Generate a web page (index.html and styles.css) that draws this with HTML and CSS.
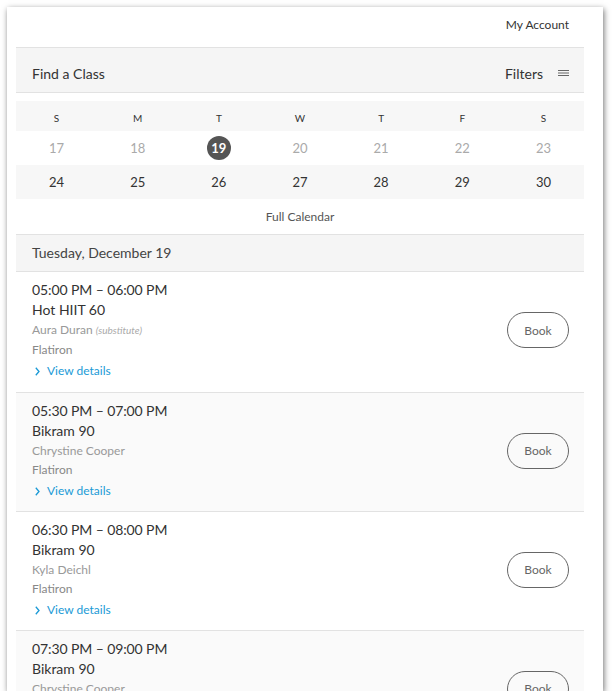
FILE: index.html
```html
<!DOCTYPE html>
<html>
<head>
<meta charset="utf-8">
<link rel="stylesheet" href="styles.css">
</head>
<body>
<div class="frame">
  <div class="top"><span>My Account</span></div>
  <div class="findbar">
    <span>Find a Class</span>
    <span class="filters">Filters
      <svg class="burger" width="11" height="6" viewBox="0 0 11 6"><rect x="0" y="0" width="11" height="1" fill="#666"/><rect x="0" y="2.5" width="11" height="1" fill="#666"/><rect x="0" y="5" width="11" height="1" fill="#666"/></svg>
    </span>
  </div>
  <div class="cal">
    <div class="row dow"><span>S</span><span>M</span><span>T</span><span>W</span><span>T</span><span>F</span><span>S</span></div>
    <div class="row week past"><span>17</span><span>18</span><span><b class="today">19</b></span><span>20</span><span>21</span><span>22</span><span>23</span></div>
    <div class="row week next"><span>24</span><span>25</span><span>26</span><span>27</span><span>28</span><span>29</span><span>30</span></div>
  </div>
  <div class="fullcal">Full Calendar</div>
  <div class="dayhead">Tuesday, December 19</div>
  <div class="list">
    <div class="item">
      <div class="info">
        <div class="time">05:00 PM – 06:00 PM</div>
        <div class="name">Hot HIIT 60</div>
        <div class="instr">Aura Duran <i class="sub">(substitute)</i></div>
        <div class="loc">Flatiron</div>
        <div class="details"><svg class="chev" width="5" height="9" viewBox="0 0 5 9"><path d="M0.8 0.8 L4 4.5 L0.8 8.2" fill="none" stroke="#1b9ad6" stroke-width="1.3"/></svg>View details</div>
      </div>
      <div class="book">Book</div>
    </div>
    <div class="item alt">
      <div class="info">
        <div class="time">05:30 PM – 07:00 PM</div>
        <div class="name">Bikram 90</div>
        <div class="instr">Chrystine Cooper</div>
        <div class="loc">Flatiron</div>
        <div class="details"><svg class="chev" width="5" height="9" viewBox="0 0 5 9"><path d="M0.8 0.8 L4 4.5 L0.8 8.2" fill="none" stroke="#1b9ad6" stroke-width="1.3"/></svg>View details</div>
      </div>
      <div class="book">Book</div>
    </div>
    <div class="item">
      <div class="info">
        <div class="time">06:30 PM – 08:00 PM</div>
        <div class="name">Bikram 90</div>
        <div class="instr">Kyla Deichl</div>
        <div class="loc">Flatiron</div>
        <div class="details"><svg class="chev" width="5" height="9" viewBox="0 0 5 9"><path d="M0.8 0.8 L4 4.5 L0.8 8.2" fill="none" stroke="#1b9ad6" stroke-width="1.3"/></svg>View details</div>
      </div>
      <div class="book">Book</div>
    </div>
    <div class="item alt">
      <div class="info">
        <div class="time">07:30 PM – 09:00 PM</div>
        <div class="name">Bikram 90</div>
        <div class="instr">Chrystine Cooper</div>
        <div class="loc">Flatiron</div>
        <div class="details"><svg class="chev" width="5" height="9" viewBox="0 0 5 9"><path d="M0.8 0.8 L4 4.5 L0.8 8.2" fill="none" stroke="#1b9ad6" stroke-width="1.3"/></svg>View details</div>
      </div>
      <div class="book">Book</div>
    </div>
  </div>
</div>
</body>
</html>
```
FILE: styles.css
```css
* { box-sizing: border-box; }
html, body { margin: 0; padding: 0; background: #fff; }
body { font-family: Lato, "Open Sans", sans-serif; color: #333; }
.frame {
  margin: 7px 0 0 7px;
  width: 596px;
  height: 684px;
  background: #fff;
  box-shadow: 1px 2px 6px rgba(0,0,0,0.55);
  overflow: hidden;
  padding: 0 19px 0 9px;
}
.top {
  height: 40px;
  display: flex;
  justify-content: flex-end;
  align-items: center;
  padding: 0 15px 6px 0;
  font-size: 12px;
  color: #333;
}
.findbar {
  height: 46px;
  border-top: 1px solid #e2e2e2;
  border-bottom: 1px solid #e2e2e2;
  background: #f5f5f5;
  display: flex;
  justify-content: space-between;
  align-items: center;
  padding: 6px 15px 0 16px;
  font-size: 14px;
  color: #333;
}
.filters { display: flex; align-items: center; }
.burger { margin-left: 15px; }
.cal { margin-top: 8px; }
.row {
  display: grid;
  grid-template-columns: repeat(7, 1fr);
  text-align: center;
  align-items: center;
}
.dow { height: 30px; background: #f7f7f7; font-size: 10px; color: #333; padding-top: 3px; }
.week { height: 34px; font-size: 13px; }
.past { color: #aaa; background: #fff; }
.next { color: #333; background: #f7f7f7; }
.today {
  display: inline-flex;
  width: 24px;
  height: 24px;
  border-radius: 50%;
  background: #555;
  color: #fff;
  font-weight: 700;
  font-size: 13px;
  align-items: center;
  justify-content: center;
}
.fullcal {
  height: 35px;
  display: flex;
  align-items: center;
  justify-content: center;
  font-size: 12px;
  color: #555;
}
.dayhead {
  height: 38px;
  border-top: 1px solid #e2e2e2;
  border-bottom: 1px solid #e2e2e2;
  background: #f5f5f5;
  display: flex;
  align-items: center;
  padding: 0 0 2px 16px;
  font-size: 14px;
  color: #444;
}
.item {
  display: flex;
  justify-content: space-between;
  align-items: center;
  padding: 8px 15px 11px 16px;
  border-bottom: 1px solid #e2e2e2;
  background: #fff;
}
.item:first-child { padding-bottom: 12px; }
.item.alt { background: #fafafa; }
.time { font-size: 14px; line-height: 20px; color: #333; letter-spacing: -0.1px; }
.name { font-size: 14px; line-height: 20px; color: #333; }
.instr { font-size: 12px; line-height: 19px; color: #999; }
.sub { font-size: 10px; color: #aaa; }
.loc { font-size: 12px; line-height: 19px; color: #888; }
.details {
  margin-top: 3px;
  font-size: 12px;
  line-height: 18px;
  color: #1b9ad6;
  display: flex;
  align-items: center;
}
.chev { margin: 0 7px 0 3px; }
.book {
  width: 62px;
  height: 36px;
  border: 1px solid #666;
  border-radius: 18px;
  display: flex;
  align-items: center;
  justify-content: center;
  font-size: 12px;
  color: #666;
}
```
